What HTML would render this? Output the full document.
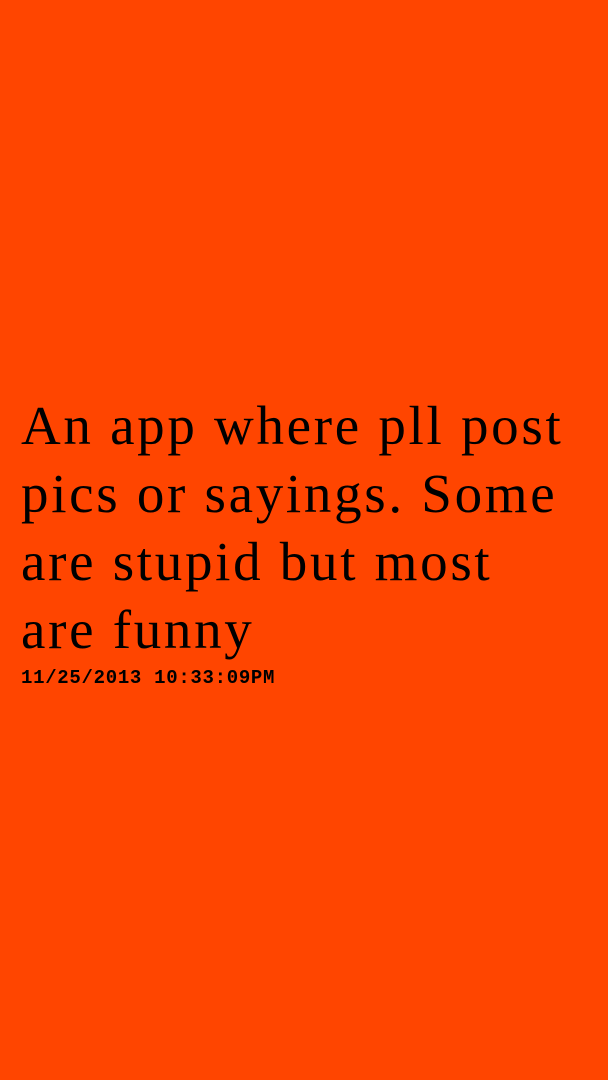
<!DOCTYPE html>
<html><head><style>
html,body{margin:0;padding:0;width:608px;height:1080px;background:#FF4500;overflow:hidden}
.t{position:absolute;left:21px;top:392px;font-family:"Liberation Serif",serif;font-size:55px;line-height:68px;letter-spacing:2.7px;color:#000;white-space:nowrap}
.d{position:absolute;left:21px;top:667px;font-family:"Liberation Mono",monospace;font-weight:bold;font-size:19px;line-height:22px;letter-spacing:0.7px;color:#000;white-space:nowrap}
</style></head><body>
<div class="t">An app where pll post<br>pics or sayings. Some<br>are stupid but most<br>are funny</div>
<div class="d">11/25/2013 10:33:09PM</div>
</body></html>
